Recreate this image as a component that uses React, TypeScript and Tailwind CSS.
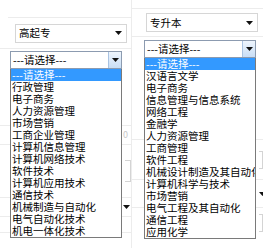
const font = { fontFamily: '"Microsoft YaHei", "Noto Sans CJK SC", "Liberation Sans", sans-serif' };

const leftItems = [
  "行政管理",
  "电子商务",
  "人力资源管理",
  "市场营销",
  "工商企业管理",
  "计算机信息管理",
  "计算机网络技术",
  "软件技术",
  "计算机应用技术",
  "通信技术",
  "机械制造与自动化",
  "电气自动化技术",
  "机电一体化技术",
];

const rightItems = [
  "汉语言文学",
  "电子商务",
  "信息管理与信息系统",
  "网络工程",
  "金融学",
  "人力资源管理",
  "工商管理",
  "软件工程",
  "机械设计制造及其自动化",
  "计算机科学与技术",
  "市场营销",
  "电气工程及其自动化",
  "通信工程",
  "应用化学",
];

function Arrow() {
  return (
    <svg width="7" height="4" viewBox="0 0 7 4">
      <path d="M0 0 L7 0 L3.5 4 Z" fill="#111" />
    </svg>
  );
}

function PlainSelect({ label }: { label: string }) {
  return (
    <div className="h-[19px] w-[112px] flex items-center justify-between border border-[#d6d6d6] bg-white pl-[3px] pr-[4px] text-[10.5px] text-black">
      <span>{label}</span>
      <Arrow />
    </div>
  );
}

// the open select: closed box in flow, option list hangs over the rows below
function OpenSelect({ items }: { items: string[] }) {
  return (
    <div className="relative w-[112px]">
      <div className="h-[18px] flex border border-[#8c9bb0] bg-white text-[10.5px] text-black">
        <div className="flex-1 flex items-center pl-[2px]">---请选择---</div>
        <div className="w-[13px] flex items-center justify-center border-l border-[#a9c3e2] bg-gradient-to-b from-[#eef5fd] to-[#c9def5]">
          <Arrow />
        </div>
      </div>
      <ul className="absolute left-0 top-full z-10 w-full overflow-hidden border border-t-0 border-[#7a7a7a] bg-white text-[10.5px] leading-[12px] text-black">
        <li className="bg-[#3399ff] pl-[1px] text-white">---请选择---</li>
        {items.map((t) => (
          <li key={t} className="pl-[1px] whitespace-nowrap">
            {t}
          </li>
        ))}
      </ul>
    </div>
  );
}

export default function App() {
  return (
    <div className="w-[263px] h-[248px] bg-white flex overflow-hidden" style={font}>
      {/* left: 高起专 */}
      <div className="w-[132px] h-full flex flex-col border-r border-[#ececec]">
        <div className="h-[17px]" />
        <div className="ml-[8px] h-[31px] border-t border-[#ececec] flex items-center pl-[7px]">
          <PlainSelect label="高起专" />
        </div>
        <div className="h-[78px] border-t border-b border-[#ececec] pl-[10px] pt-[2px]">
          <OpenSelect items={leftItems} />
        </div>
        <div className="h-[19px] border-b border-[#ececec] flex items-center justify-end pr-[3px] text-[9px] text-[#c8c8c8]">
          0
        </div>
        <div className="h-[53px] border-b border-[#ececec] flex items-center justify-end">
          <div className="h-[22px] w-[6px] border border-l-0 border-[#d4d4d4]" />
        </div>
        <div className="h-[19px] border-b border-[#ececec] flex items-center justify-end pr-[1px]">
          <Arrow />
        </div>
        <div className="h-[16px] border-b border-[#ececec]" />
        <div className="flex-1" />
      </div>

      {/* right: 专升本 */}
      <div className="flex-1 h-full flex flex-col">
        <div className="h-[8px]" />
        <div className="h-[28px] border-t border-[#ececec] flex items-center pl-[14px]">
          <PlainSelect label="专升本" />
        </div>
        <div className="h-[104px] border-t border-b border-[#ececec] pl-[12px] pt-[3px]">
          <OpenSelect items={rightItems} />
        </div>
        <div className="h-[40px] border-b border-[#ececec] flex items-center justify-end">
          <div className="h-[18px] w-[4px] border border-l-0 border-[#d4d4d4]" />
        </div>
        <div className="h-[28px] border-b border-[#ececec] flex items-center justify-end">
          <div className="w-[4px] overflow-hidden">
            <Arrow />
          </div>
        </div>
        <div className="flex-1 flex items-start justify-end pt-[6px]">
          <div className="h-[18px] w-[4px] border border-l-0 border-[#d4d4d4]" />
        </div>
      </div>
    </div>
  );
}
